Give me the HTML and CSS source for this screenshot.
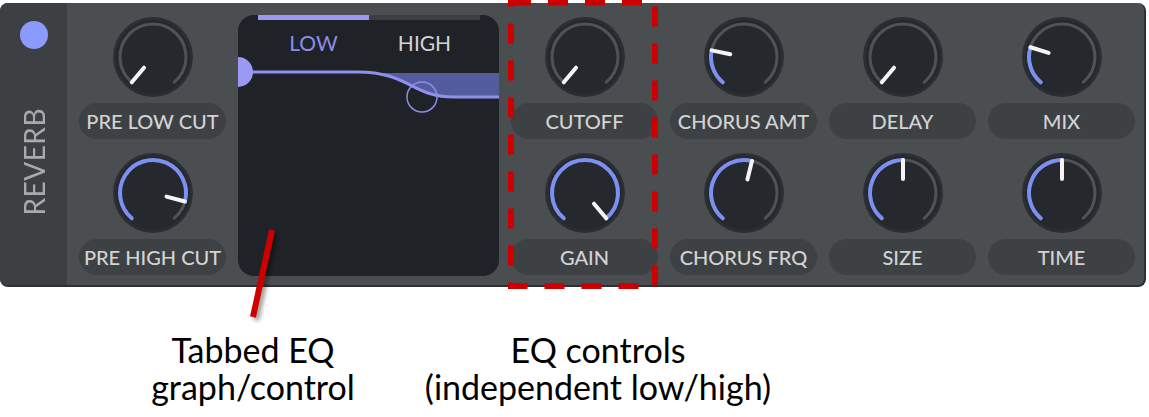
FILE: index.html
```html
<!DOCTYPE html>
<html>
  <head>
    <meta charset="utf-8"/>
    <link rel="stylesheet" href="styles.css">
  </head>
  <body>
    <div class="page">
      <div class="panel">
        <div class="side">
          <span class="led"></span>
          <span class="title">REVERB</span>
        </div>

        <div class="controls">
          <div class="col">
            <div class="knob" data-value="0"></div>
            <div class="label">PRE LOW CUT</div>
            <div class="knob" data-value="0.875"></div>
            <div class="label">PRE HIGH CUT</div>
          </div>

          <div class="eq">
            <svg class="eq-graph" width="261" height="261" viewBox="0 0 261 261">
              <path class="eq-fill" d="M120 58 C170 58 175 82 215 82 L261 82 L261 58 Z"/>
              <path class="eq-line" d="M0 57 L120 57 C170 57 175 82 215 82 L261 82"/>
              <circle class="eq-dot" cx="0" cy="57" r="15"/>
              <circle class="eq-handle" cx="184" cy="82" r="15"/>
            </svg>
            <div class="tabs">
              <div class="tab active">LOW</div>
              <div class="tab">HIGH</div>
            </div>
          </div>

          <div class="col">
            <div class="knob" data-value="0"></div>
            <div class="label">CUTOFF</div>
            <div class="knob" data-value="1"></div>
            <div class="label">GAIN</div>
          </div>

          <div class="col">
            <div class="knob" data-value="0.22"></div>
            <div class="label">CHORUS AMT</div>
            <div class="knob" data-value="0.55"></div>
            <div class="label">CHORUS FRQ</div>
          </div>

          <div class="col">
            <div class="knob" data-value="0"></div>
            <div class="label">DELAY</div>
            <div class="knob" data-value="0.5"></div>
            <div class="label">SIZE</div>
          </div>

          <div class="col">
            <div class="knob" data-value="0.24"></div>
            <div class="label">MIX</div>
            <div class="knob" data-value="0.5"></div>
            <div class="label">TIME</div>
          </div>
        </div>
      </div>

      <div class="notes">
        <div class="note note-graph">Tabbed EQ<br/>graph/control</div>
        <div class="note note-ctl">EQ controls<br/>(independent low/high)</div>
      </div>

      <!-- callout marks drawn on top of the panel -->
      <svg class="marks" width="1149" height="417">
        <defs>
          <filter id="shade" x="-50%" y="-50%" width="200%" height="200%">
            <feDropShadow dx="3" dy="3" stdDeviation="2" flood-color="#000" flood-opacity="0.4"/>
          </filter>
        </defs>
        <rect class="mark-box" x="511" y="2.5" width="144" height="283.5"/>
        <line class="mark-line" x1="592" y1="286" x2="592" y2="328"/>
        <line class="mark-line" x1="272" y1="230" x2="253" y2="317"/>
      </svg>
    </div>

    <script type="text/javascript">
      // knob sweep: -140deg .. +140deg, measured clockwise from 12 o'clock
      var START = -140;
      var RANGE = 280;

      function pt(r, a) {
        var rad = a * Math.PI / 180;
        return (40 + r * Math.sin(rad)).toFixed(2) + ' ' + (40 - r * Math.cos(rad)).toFixed(2);
      }

      function arc(r, a0, a1) {
        var large = (a1 - a0) > 180 ? 1 : 0;
        return 'M' + pt(r, a0) + ' A' + r + ' ' + r + ' 0 ' + large + ' 1 ' + pt(r, a1);
      }

      function drawKnob(el) {
        var v = parseFloat(el.getAttribute('data-value'));
        var a = START + v * RANGE;
        var svg = '<svg width="80" height="80" viewBox="0 0 80 80">';
        svg += '<circle cx="40" cy="40" r="40" fill="#2b2e32"/>';
        svg += '<circle cx="40" cy="40" r="37" fill="#25282c"/>';
        svg += '<path d="' + arc(33, START, START + RANGE) + '" class="k-track"/>';
        if (v > 0)
          svg += '<path d="' + arc(33, START, a) + '" class="k-value"/>';
        svg += '<path d="M' + pt(14, a) + ' L' + pt(33, a) + '" class="k-pointer"/>';
        svg += '</svg>';
        el.innerHTML = svg;
      }

      var knobs = document.querySelectorAll('.knob');
      for (var i = 0; i < knobs.length; i++) {
        drawKnob(knobs[i]);
      }
    </script>
  </body>
</html>
```

FILE: styles.css
```css
html, body {
  margin: 0;
  padding: 0;
  background-color: #fff;
  font-family: "Lato", "Open Sans", sans-serif;
}
.page {
  position: relative;
  width: 1149px;
  height: 417px;
  overflow: hidden;
}
.panel {
  display: flex;
  margin-top: 3px;
  width: 1144px;
  height: 282px;
  background-color: #4b4e51;
  border-radius: 8px;
  border-right: #2e3033 2px solid;
  border-bottom: #2e3033 2px solid;
  overflow: hidden;
}

/* left strip with power led and module name */
.side {
  display: flex;
  flex-direction: column;
  align-items: center;
  width: 67px;
  background-color: #3d4043;
}
.led {
  display: block;
  width: 28px;
  height: 28px;
  margin-top: 18px;
  border-radius: 50%;
  background-color: #8b9afd;
}
.title {
  margin-top: 59px;
  writing-mode: vertical-rl;
  transform: rotate(180deg);
  font-size: 28px;
  font-weight: 400;
  line-height: 1;
  letter-spacing: 0.5px;
  color: #a7abaf;
}

.controls {
  display: flex;
  gap: 12px;
  padding: 12px 0 11px 12px;
}
.col {
  display: flex;
  flex-direction: column;
  align-items: center;
  width: 147px;
  padding-top: 2px;
}
.knob {
  width: 80px;
  height: 80px;
}
.knob svg {
  display: block;
}
.knob + .label {
  margin-top: 6px;
}
.label + .knob {
  margin-top: 14px;
}
.label {
  width: 100%;
  height: 36px;
  line-height: 36px;
  border-radius: 18px;
  background-color: #3e4144;
  text-align: center;
  font-size: 20px;
  font-weight: 500;
  color: #d2d3d3;
  white-space: nowrap;
}
.k-track {
  fill: none;
  stroke: #4f5256;
  stroke-width: 3;
  stroke-linecap: round;
}
.k-value {
  fill: none;
  stroke: #7c8ff2;
  stroke-width: 4;
  stroke-linecap: round;
}
.k-pointer {
  fill: none;
  stroke: #f4f4f4;
  stroke-width: 4;
  stroke-linecap: round;
}

/* eq graph with low / high tabs */
.eq {
  position: relative;
  width: 261px;
  height: 261px;
  background-color: #1f2226;
  border-radius: 16px;
  overflow: hidden;
}
.eq-graph {
  position: absolute;
  left: 0;
  top: 0;
}
.eq-fill {
  fill: #535c9c;
}
.eq-line {
  fill: none;
  stroke: #908ff0;
  stroke-width: 3;
}
.eq-dot {
  fill: #9b99f3;
}
.eq-handle {
  fill: none;
  stroke: #8d8ce8;
  stroke-width: 1.5;
}
.tabs {
  position: relative;
  display: flex;
  margin: 0 19px 0 20px;
}
.tab {
  flex: 1;
  height: 42px;
  line-height: 46px;
  border-top: #3b3e42 5px solid;
  text-align: center;
  font-size: 21px;
  color: #d4d4d4;
}
.tab.active {
  border-top-color: #9b99f3;
  color: #8e8ce8;
}

/* captions under the panel */
.notes {
  display: flex;
  gap: 35px;
  margin-top: 44px;
  padding-left: 143px;
}
.note {
  text-align: center;
  font-size: 34px;
  line-height: 37px;
  color: #000;
  white-space: nowrap;
}
.note-graph {
  width: 220px;
}
.note-ctl {
  width: 400px;
}

.marks {
  position: absolute;
  left: 0;
  top: 0;
  pointer-events: none;
}
.mark-box {
  fill: none;
  stroke: #cc0000;
  stroke-width: 6;
  stroke-dasharray: 20 17;
}
.mark-line {
  stroke: #cc0000;
  stroke-width: 6;
  filter: url(#shade);
}
```
